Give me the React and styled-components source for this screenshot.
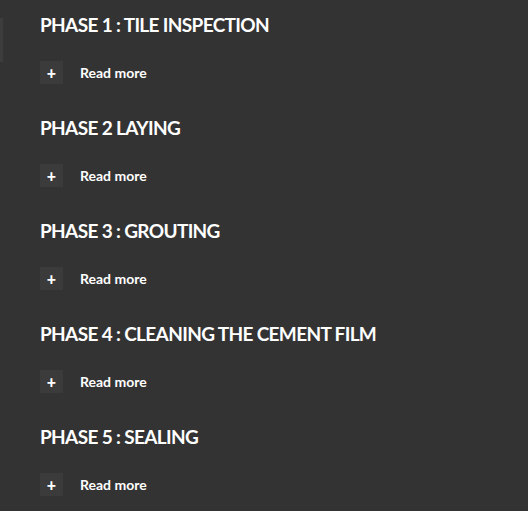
import React from "react";
import styled, { createGlobalStyle } from "styled-components";

const GlobalStyle = createGlobalStyle`
    html, body {
        margin: 0;
        padding: 0;
        background: #333333;
    }
    body {
        font-family: Lato, "Open Sans", sans-serif;
    }
`;

const phases = [
    "PHASE 1 : TILE INSPECTION",
    "PHASE 2 LAYING",
    "PHASE 3 : GROUTING",
    "PHASE 4 : CLEANING THE CEMENT FILM",
    "PHASE 5 : SEALING",
];

const App = () => {
    return (
        <>
            <GlobalStyle />
            <Page>
                <SideTab />
                <List>
                    {phases.map((title) => (
                        <Phase key={title}>
                            <Title>{title}</Title>
                            <Toggle>
                                <PlusBox>+</PlusBox>
                                <ReadMore>Read more</ReadMore>
                            </Toggle>
                        </Phase>
                    ))}
                </List>
            </Page>
        </>
    );
};

export default App;

const Page = styled.div`
    position: relative;
    width: 528px;
    height: 511px;
    background: #333333;
    overflow: hidden;
`;

const SideTab = styled.div`
    position: absolute;
    left: 0;
    top: 18px;
    width: 3px;
    height: 44px;
    background: #3d3d3d;
`;

const List = styled.div`
    display: flex;
    flex-direction: column;
    padding: 12px 0 0 40px;
`;

const Phase = styled.div`
    display: flex;
    flex-direction: column;
    height: 103px;
`;

const Title = styled.h3`
    margin: 0;
    font-size: 19px;
    line-height: 26px;
    font-weight: 700;
    color: #ffffff;
    letter-spacing: -0.65px;
`;

const Toggle = styled.div`
    display: flex;
    align-items: center;
    gap: 17px;
    margin-top: 23px;
    cursor: pointer;
`;

const PlusBox = styled.span`
    display: flex;
    align-items: center;
    justify-content: center;
    width: 23px;
    height: 23px;
    background: #3b3b3b;
    color: #ffffff;
    font-size: 16px;
    font-weight: 900;
    line-height: 1;
`;

const ReadMore = styled.span`
    color: #ffffff;
    font-size: 14px;
    font-weight: 700;
`;
